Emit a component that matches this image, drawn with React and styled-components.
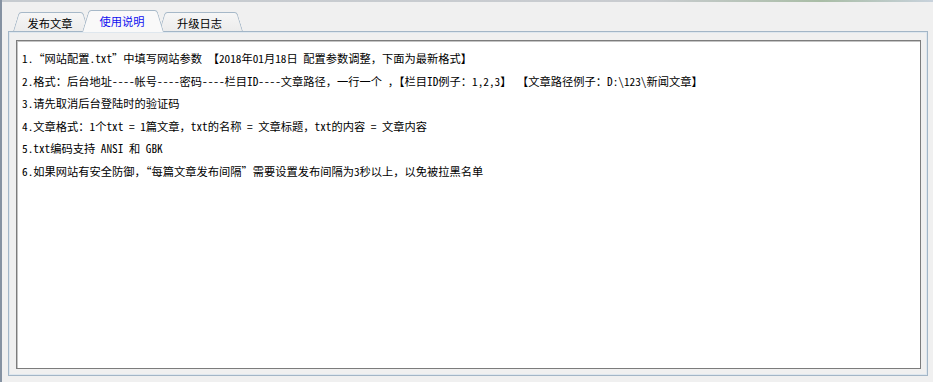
import React from 'react';
import styled, { createGlobalStyle, css } from 'styled-components';

const GlobalStyle = createGlobalStyle`
  html, body {
    margin: 0;
    padding: 0;
    background: #f0f0f0;
  }
`;

const Window = styled.div`
  box-sizing: border-box;
  width: 933px;
  height: 382px;
  background: #f0f0f0;
  border-left: 2px solid #8592a2;
  padding: 10px 5px 6px 6px;
  display: flex;
  flex-direction: column;
  position: relative;
  font-family: "Noto Sans Mono CJK SC", "Noto Sans CJK SC", sans-serif;

  &::before {
    content: '';
    position: absolute;
    left: 0;
    right: 0;
    top: 0;
    height: 2px;
    background: linear-gradient(to right, #c6cbd0 0%, #c9ccd0 70%, #a9bda6 88%, #c8d2dc 100%);
  }
`;

const TabStrip = styled.div`
  display: flex;
  align-items: flex-end;
  height: 21px;
  padding-left: 5px;
  position: relative;
  z-index: 2;
`;

const Tab = styled.div`
  position: relative;
  box-sizing: border-box;
  width: ${(p) => p.$width}px;
  height: 19px;
  margin-left: ${(p) => p.$offset || 0}px;
  display: flex;
  align-items: center;
  justify-content: center;
  padding-right: 2px;
  padding-top: 2px;
  font-size: 11.25px;
  color: #000;
  cursor: default;

  &::before,
  &::after {
    content: '';
    position: absolute;
    top: 0;
    bottom: 0;
    z-index: -1;
    background: linear-gradient(#f6f6f6, #ececec);
    border-top: 1px solid #a6b8c8;
  }

  &::before {
    left: 0;
    right: 50%;
    transform-origin: bottom left;
    transform: skewX(-17deg);
    border-left: 1px solid #a6b8c8;
    border-top-left-radius: 3px;
  }

  &::after {
    left: 50%;
    right: 0;
    transform-origin: bottom right;
    transform: skewX(17deg);
    border-right: 1px solid #a6b8c8;
    border-top-right-radius: 3px;
  }

  ${(p) =>
    p.$active &&
    css`
      height: 22px;
      margin-bottom: -1px;
      padding-top: 0;
      color: #1010f0;
      z-index: 1;

      &::before,
      &::after {
        background: #f9f9f9;
      }
    `}
`;

const Panel = styled.div`
  flex: 1;
  box-sizing: border-box;
  border: 1px solid #a3b6c7;
  box-shadow: inset 1px 1px 0 #dfe7ee, inset -1px -1px 0 #dfe7ee;
  background: #f0f0f0;
  padding: 8px 6px 6px 7px;
  display: flex;
  position: relative;
  z-index: 1;
`;

const TextBox = styled.div`
  flex: 1;
  box-sizing: border-box;
  background: #fff;
  border: 1px solid #7c7c7c;
  box-shadow: inset 1px 1px 0 #c4c4c4;
  padding: 6px 5px;
  font-size: 11.25px;
  color: #000;
`;

const Line = styled.div`
  line-height: 22.6px;
  white-space: nowrap;
`;

const tabs = [
  { label: '发布文章', width: 76, offset: 0 },
  { label: '使用说明', width: 82, offset: -7, active: true },
  { label: '升级日志', width: 83, offset: -5 },
];

const lines = [
  '1.“网站配置.txt”中填写网站参数 【2018年01月18日 配置参数调整，下面为最新格式】',
  '2.格式：后台地址----帐号----密码----栏目ID----文章路径，一行一个 ，【栏目ID例子：1,2,3】 【文章路径例子：D:\\123\\新闻文章】',
  '3.请先取消后台登陆时的验证码',
  '4.文章格式：1个txt = 1篇文章，txt的名称 = 文章标题，txt的内容 = 文章内容',
  '5.txt编码支持 ANSI 和 GBK',
  '6.如果网站有安全防御，“每篇文章发布间隔”需要设置发布间隔为3秒以上，以免被拉黑名单',
];

export default function App() {
  return (
    <>
      <GlobalStyle />
      <Window>
        <TabStrip>
          {tabs.map((t) => (
            <Tab key={t.label} $width={t.width} $offset={t.offset} $active={t.active}>
              {t.label}
            </Tab>
          ))}
        </TabStrip>
        <Panel>
          <TextBox>
            {lines.map((l) => (
              <Line key={l}>{l}</Line>
            ))}
          </TextBox>
        </Panel>
      </Window>
    </>
  );
}
